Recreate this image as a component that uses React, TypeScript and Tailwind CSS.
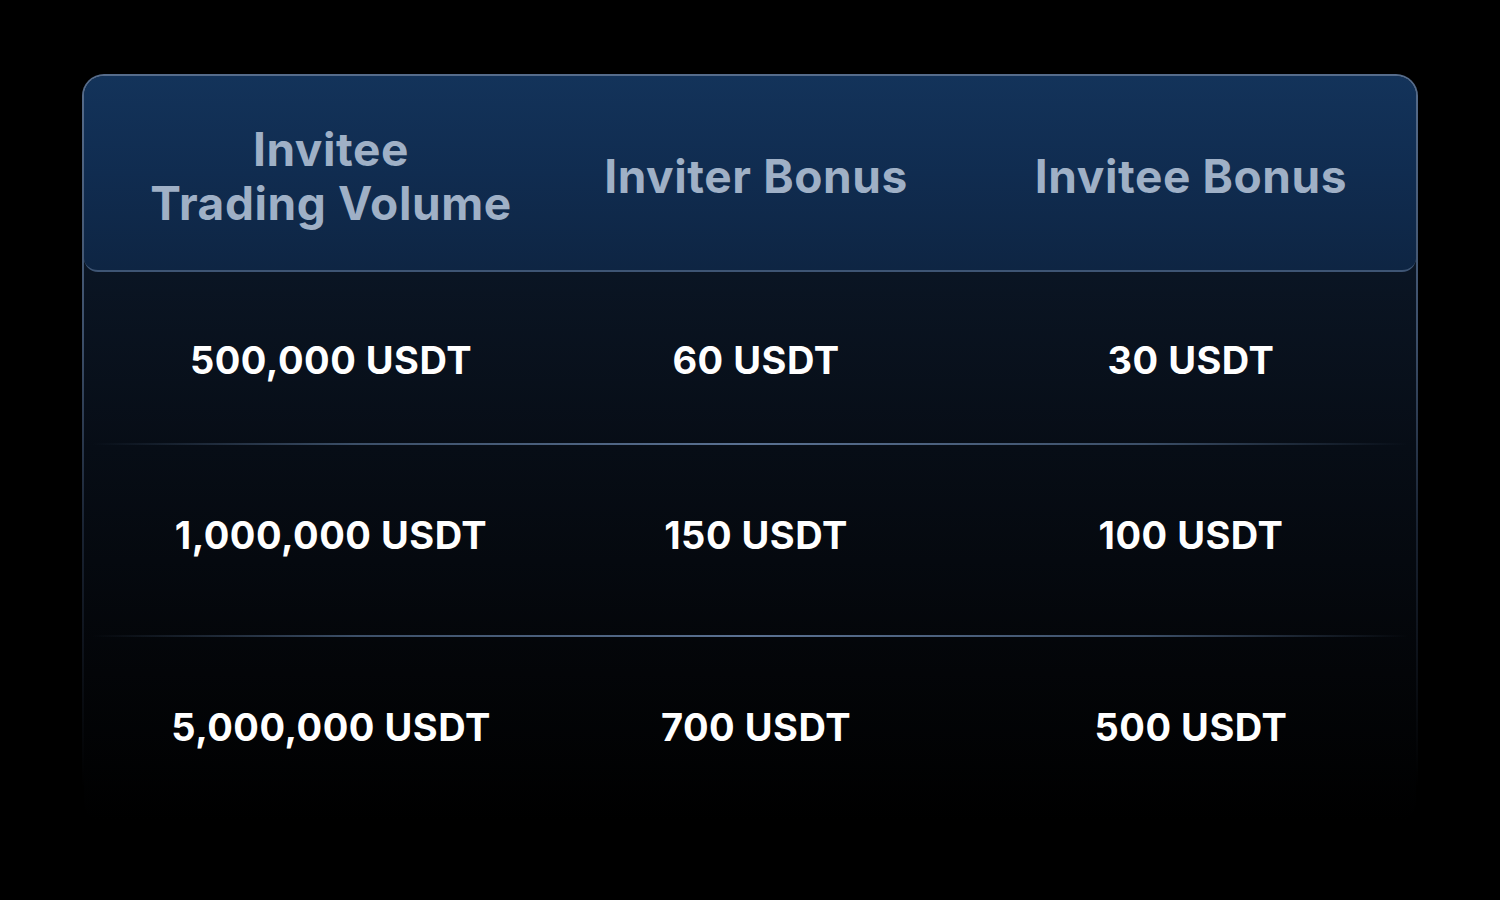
import React from 'react';

const rows = [
  ['500,000 USDT', '60 USDT', '30 USDT'],
  ['1,000,000 USDT', '150 USDT', '100 USDT'],
  ['5,000,000 USDT', '700 USDT', '500 USDT'],
];

const rowCls = ['h-[171px] pt-[6px]', 'h-[190px] pb-[10px]', 'h-[185px] pb-[4px]'];

const App = () => {
  return (
    <div className="min-h-screen w-full bg-black pt-[74px] px-[82px] font-['Inter','Liberation_Sans',sans-serif]">
      <div className="rounded-[22px] p-[2px] bg-[linear-gradient(to_bottom,#566c8b_0%,#3c4f6a_35%,#1a2434_60%,#000000_95%)]">
        <div className="rounded-[20px] overflow-hidden bg-[linear-gradient(to_bottom,#0d1d33_0%,#0b1727_20%,#070d16_50%,#030508_80%,#000000_100%)]">
          {/* header */}
          <div className="h-[196px] pt-[5px] rounded-b-[14px] bg-[linear-gradient(to_bottom,#13335a_0%,#102c50_50%,#0e2543_100%)] border-b-2 border-[#3e5574] grid grid-cols-[430px_420px_1fr] pl-[32px] items-center">
            <div className="text-center text-[46px] leading-[54px] font-bold text-[#9fb0c6] tracking-[0.6px]">
              Invitee
              <br />
              Trading Volume
            </div>
            <div className="text-center text-[46px] leading-[54px] font-bold text-[#9fb0c6] tracking-[0.6px]">Inviter Bonus</div>
            <div className="text-center text-[46px] leading-[54px] font-bold text-[#9fb0c6] tracking-[0.6px]">Invitee Bonus</div>
          </div>

          {rows.map((r, i) => (
            <div key={i}>
              {i > 0 && (
                <div className="h-[2px] mx-[8px] bg-[linear-gradient(to_right,transparent_0%,#3c4f68_20%,#5a7192_50%,#3c4f68_80%,transparent_100%)]" />
              )}
              <div className={`${rowCls[i]} grid grid-cols-[430px_420px_1fr] pl-[32px] items-center`}>
                {r.map((c, j) => (
                  <div key={j} className="text-center text-[38px] font-bold text-white tracking-[0.5px]">
                    {c}
                  </div>
                ))}
              </div>
            </div>
          ))}
        </div>
      </div>
    </div>
  );
};

export default App;
